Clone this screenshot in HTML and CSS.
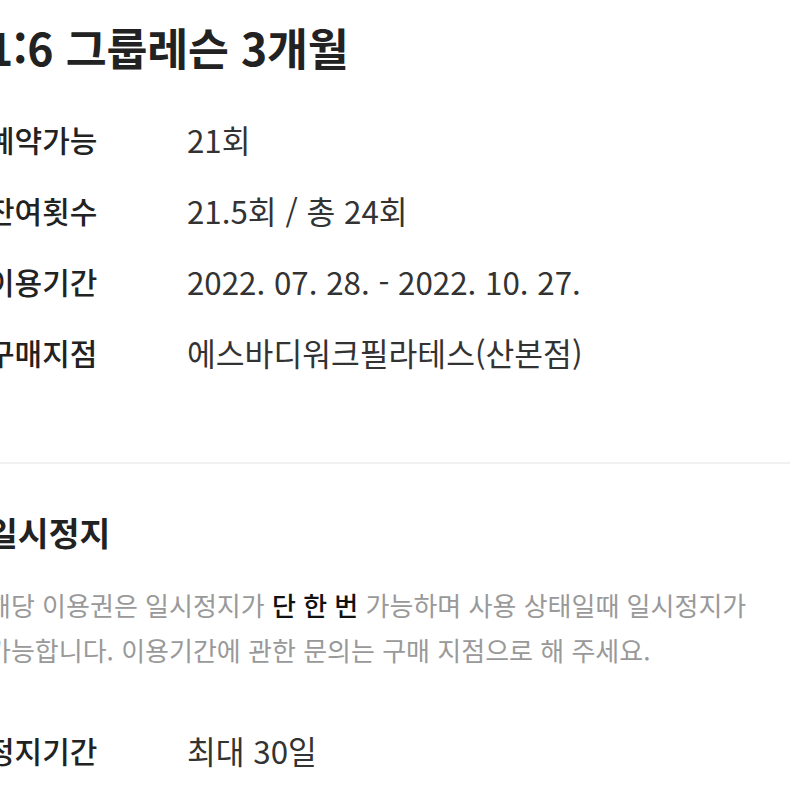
FILE: index.html
```html
<!DOCTYPE html>
<html lang="ko">
<head>
<meta charset="utf-8">
<link rel="stylesheet" href="styles.css">
</head>
<body>
<div class="page">
  <section class="pass">
    <h1 class="title">1:6 그룹레슨 3개월</h1>
    <dl class="info">
      <div class="row"><dt>예약가능</dt><dd>21회</dd></div>
      <div class="row"><dt>잔여횟수</dt><dd>21.5회 / 총 24회</dd></div>
      <div class="row"><dt>이용기간</dt><dd>2022. 07. 28. - 2022. 10. 27.</dd></div>
      <div class="row"><dt>구매지점</dt><dd>에스바디워크필라테스(산본점)</dd></div>
    </dl>
  </section>
  <section class="pause">
    <h2 class="sub">일시정지</h2>
    <p class="desc">해당 이용권은 일시정지가 <strong>단 한 번</strong> 가능하며 사용 상태일때 일시정지가 가능합니다. 이용기간에 관한 문의는 구매 지점으로 해 주세요.</p>
    <dl class="info">
      <div class="row"><dt>정지기간</dt><dd>최대 30일</dd></div>
    </dl>
  </section>
</div>
</body>
</html>
```

FILE: styles.css
```css
html, body {
  margin: 0;
  padding: 0;
  background: #ffffff;
  overflow: hidden;
}
body {
  font-family: "Noto Sans CJK KR", "Noto Sans", sans-serif;
  color: #222222;
}
.page {
  margin-left: -13px;
  width: 803px;
}
.pass {
  padding-top: 22px;
  padding-bottom: 74px;
}
.title {
  margin: 0 0 32px 0;
  font-size: 44.5px;
  line-height: 50px;
  font-weight: 700;
  color: #222222;
  letter-spacing: -0.2px;
}
.info {
  margin: 0;
}
.row {
  display: flex;
  height: 71px;
  align-items: center;
  line-height: 71px;
}
.row dt {
  width: 200px;
  flex: none;
  font-size: 30px;
  font-weight: 500;
  color: #222222;
}
.row dd {
  margin: 0;
  font-size: 31.3px;
  font-weight: 400;
  color: #333333;
}
.pause {
  border-top: 2px solid #f1f1f1;
  padding-top: 48px;
}
.sub {
  margin: 0 0 30px 0;
  font-size: 33.5px;
  line-height: 40px;
  font-weight: 700;
  color: #222222;
}
.desc {
  margin: 0 0 43px 0;
  font-size: 26px;
  line-height: 45px;
  color: #999999;
  word-break: keep-all;
}
.desc strong {
  font-weight: 500;
  color: #111111;
}
```
